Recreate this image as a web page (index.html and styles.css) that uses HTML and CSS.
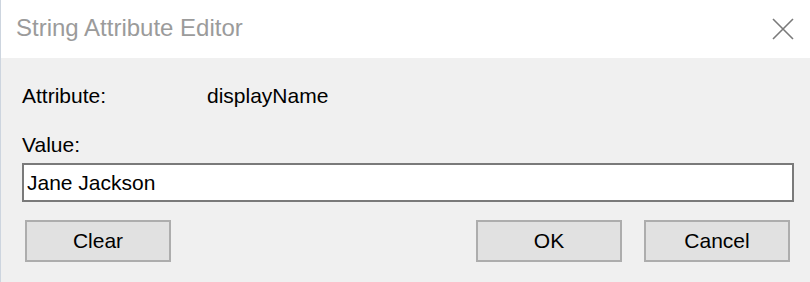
FILE: index.html
```html
<!DOCTYPE html>
<html lang="en">
<head>
<meta charset="UTF-8" />
<meta name="viewport" content="width=device-width, initial-scale=1" />
<title>String Attribute Editor</title>
<link rel="stylesheet" href="styles.css">
</head>
<body>

<div class="window">
  <div class="titlebar">
    <span class="title">String Attribute Editor</span>
    <span class="close">
      <svg width="22" height="22" viewBox="0 0 22 22">
        <path d="M1 1 L21 21 M21 1 L1 21" stroke="#7a7a7a" stroke-width="1.6" fill="none" />
      </svg>
    </span>
  </div>

  <div class="content">
    <div class="row">
      <span class="label">Attribute:</span>
      <span>displayName</span>
    </div>

    <div class="value-label">Value:</div>
    <input class="value-input" type="text" value="Jane Jackson">

    <div class="buttons">
      <button class="btn">Clear</button>
      <div class="spacer"></div>
      <button class="btn">OK</button>
      <button class="btn">Cancel</button>
    </div>
  </div>
</div>

</body>
</html>
```

FILE: styles.css
```css
body {
  margin: 0;
  background: #f0f0f0;
  font-family: 'Liberation Sans', Arial, sans-serif;
  font-size: 21px;
  color: #000;
}
.window {
  height: 282px;
  border-left: 1px solid #cdd5df;
  background: #f0f0f0;
  box-sizing: border-box;
}
.titlebar {
  height: 58px;
  background: #fff;
  display: flex;
  align-items: center;
  justify-content: space-between;
  padding: 0 16px 2px 15px;
  box-sizing: border-box;
}
.title {
  font-size: 24px;
  color: #9b9b9b;
}
.close {
  display: flex;
  margin-top: 1px;
}
.content {
  padding: 26px 16px 0 21px;
}
.row {
  display: flex;
  line-height: 24px;
}
.label {
  width: 185px;
}
.value-label {
  line-height: 24px;
  margin-top: 25px;
}
/* text box */
.value-input {
  display: block;
  width: 100%;
  height: 39px;
  margin-top: 6px;
  box-sizing: border-box;
  border: 2px solid #7a7a7a;
  padding: 0 3px;
  font-family: inherit;
  font-size: 21px;
  color: #000;
  background: #fff;
  outline: none;
}
.buttons {
  display: flex;
  gap: 22px;
  margin: 18px 4px 0 3px;
}
.spacer {
  flex: 1;
}
.btn {
  width: 146px;
  height: 42px;
  background: #e1e1e1;
  border: 2px solid #adadad;
  font-family: inherit;
  font-size: 21px;
  color: #000;
  padding: 0;
}
```
